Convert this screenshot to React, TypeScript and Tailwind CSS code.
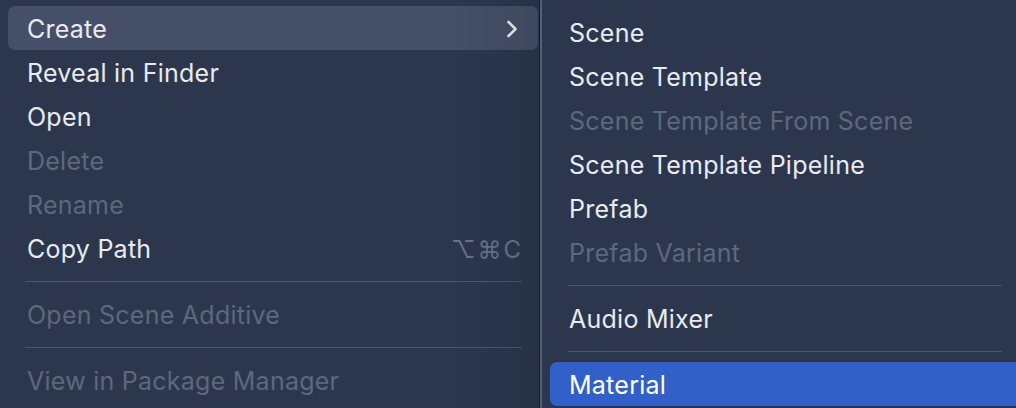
import React from "react";

type Item =
  | { kind: "item"; label: string; disabled?: boolean; shortcut?: string; submenu?: boolean; active?: boolean; selected?: boolean }
  | { kind: "sep" };

const left: Item[] = [
  { kind: "item", label: "Create", submenu: true, active: true },
  { kind: "item", label: "Reveal in Finder" },
  { kind: "item", label: "Open" },
  { kind: "item", label: "Delete", disabled: true },
  { kind: "item", label: "Rename", disabled: true },
  { kind: "item", label: "Copy Path", shortcut: "⌥⌘C" },
  { kind: "sep" },
  { kind: "item", label: "Open Scene Additive", disabled: true },
  { kind: "sep" },
  { kind: "item", label: "View in Package Manager", disabled: true },
];

const right: Item[] = [
  { kind: "item", label: "Scene" },
  { kind: "item", label: "Scene Template" },
  { kind: "item", label: "Scene Template From Scene", disabled: true },
  { kind: "item", label: "Scene Template Pipeline" },
  { kind: "item", label: "Prefab" },
  { kind: "item", label: "Prefab Variant", disabled: true },
  { kind: "sep" },
  { kind: "item", label: "Audio Mixer" },
  { kind: "sep" },
  { kind: "item", label: "Material", selected: true },
];

function Row({ item, side }: { item: Item; side: "l" | "r" }) {
  if (item.kind === "sep") {
    return (
      <div className={`h-[22px] flex items-center ${side === "l" ? "pl-[17px] pr-[16px]" : "pl-[18px] pr-[34px]"}`}>
        <div className="h-px w-full bg-[#4b556a]" />
      </div>
    );
  }
  const bg = item.selected
    ? "bg-[#3161c8]"
    : item.active
    ? "bg-[#455068]"
    : "";
  const color = item.disabled ? "text-[#5d687d]" : item.selected ? "text-white" : "text-[#e9ebef]";
  return (
    <div className={`h-[44px] flex items-center justify-between pl-[19px] pr-[15px] rounded-[7px] ${bg} ${color}`}>
      <span className="leading-none pt-[3px] tracking-[0.25px]">{item.label}</span>
      {item.shortcut && (
        <span className="text-[#68738a] tracking-[2px] leading-none pt-[3px] text-[24px]">⌥⌘C</span>
      )}
      {item.submenu && (
        <svg width="12" height="18" viewBox="0 0 12 18" className="mr-[5px] mt-[2px]">
          <path d="M2.5 2 L9.5 9 L2.5 16" fill="none" stroke="#e9ebef" strokeWidth="2.6" strokeLinecap="round" strokeLinejoin="round" />
        </svg>
      )}
    </div>
  );
}

export default function App() {
  return (
    <div
      className="w-[1016px] h-[408px] flex overflow-hidden bg-[#2c374e] text-[25px]"
      style={{ fontFamily: "Inter, 'Noto Sans', sans-serif" }}
    >
      <div className="relative w-[539px] shrink-0 pt-[6px] pl-[8px] pr-px">
        {left.map((it, i) => (
          <Row key={i} item={it} side="l" />
        ))}
        <div className="pointer-events-none absolute inset-y-0 right-0 w-[90px] bg-gradient-to-r from-transparent to-black/10" />
      </div>
      <div className="w-px shrink-0 bg-[#161c28]" />
      <div className="w-[2px] shrink-0 bg-[#586174]" />
      <div className="flex-1 pt-[10px] pl-[8px] -mr-[20px]">
        {right.map((it, i) => (
          <Row key={i} item={it} side="r" />
        ))}
      </div>
    </div>
  );
}
